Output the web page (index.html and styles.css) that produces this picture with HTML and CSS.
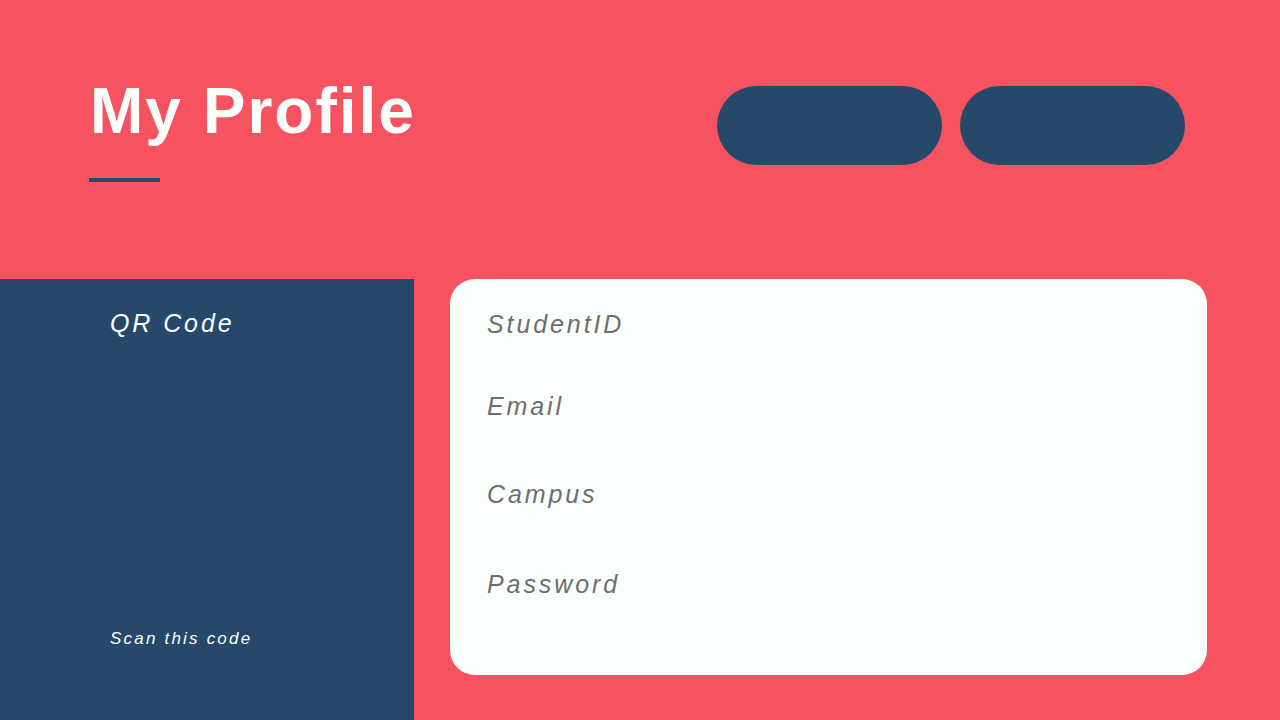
FILE: index.html
```html
<!DOCTYPE html>
<html lang="en">
<head>
<meta charset="utf-8">
<title>My Profile</title>
<link rel="stylesheet" href="styles.css">
</head>
<body>
<div class="page">
  <header class="header">
    <div class="title-block">
      <h1 class="title">My Profile</h1>
      <div class="underline"></div>
    </div>
    <div class="actions">
      <button class="pill" type="button"></button>
      <button class="pill" type="button"></button>
    </div>
  </header>
  <main class="main">
    <aside class="qr-panel">
      <div class="qr-title">QR Code</div>
      <div class="qr-hint">Scan this code</div>
    </aside>
    <section class="card">
      <div class="field field-id">StudentID</div>
      <div class="field field-email">Email</div>
      <div class="field field-campus">Campus</div>
      <div class="field field-password">Password</div>
    </section>
  </main>
</div>
</body>
</html>
```

FILE: styles.css
```css
* { box-sizing: border-box; }
html, body { margin: 0; padding: 0; }
body {
  background: #f7525f;
  font-family: "Liberation Sans", Arial, sans-serif;
  width: 1280px;
  height: 720px;
  overflow: hidden;
}
.page { display: flex; flex-direction: column; height: 720px; }
.header {
  display: flex;
  align-items: flex-start;
  height: 279px;
}
.title-block { padding-top: 79px; padding-left: 90px; }
.title {
  margin: 0;
  color: #fbfffb;
  font-size: 64px;
  line-height: 64px;
  font-weight: 700;
  letter-spacing: 2px;
}
.underline {
  margin-top: 35px;
  margin-left: -1px;
  width: 71px;
  height: 4px;
  background: #26486b;
}
.actions {
  margin-left: auto;
  margin-right: 95px;
  margin-top: 86px;
  display: flex;
  gap: 18px;
}
.pill {
  width: 225px;
  height: 79px;
  border: 0;
  padding: 0;
  border-radius: 40px;
  background: #26486b;
}
.main { display: flex; flex: 1; }
.qr-panel {
  width: 414px;
  background: #26486b;
  color: #fbfffb;
  display: flex;
  flex-direction: column;
  padding: 32px 0 73px 110px;
  font-style: italic;
}
.qr-title {
  font-size: 25px;
  line-height: 25px;
  letter-spacing: 2.9px;
}
.qr-hint {
  margin-top: auto;
  font-size: 17px;
  line-height: 17px;
  letter-spacing: 2.2px;
}
.card {
  margin-left: 36px;
  width: 757px;
  height: 396px;
  background: #fafffb;
  border-radius: 25px;
  padding: 33px 0 0 37px;
}
.field {
  color: #6e6e6e;
  font-style: italic;
  font-size: 25px;
  line-height: 25px;
  letter-spacing: 2.9px;
}
.field-email { margin-top: 57px; }
.field-campus { margin-top: 63px; }
.field-password { margin-top: 65px; }
```
